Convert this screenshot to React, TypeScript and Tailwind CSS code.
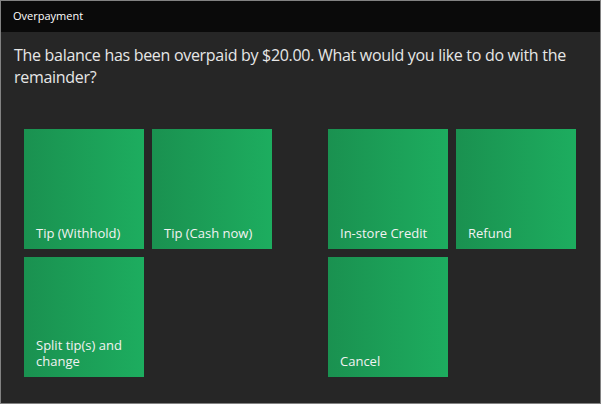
import type { FC } from "react";

interface ITileProps {
  label: string;
}

const Tile: FC<ITileProps> = ({ label }) => (
  <button className="w-[120px] h-[120px] flex items-end px-3 pb-2 text-left text-[13px] leading-[16px] text-[#f2f2f2] bg-gradient-to-r from-[#1a9150] to-[#1dad5f]">
    {label}
  </button>
);

export default function App() {
  return (
    <div
      className="w-[601px] h-[404px] flex flex-col border border-[#828282] bg-[#262626]"
      style={{ fontFamily: '"Open Sans", "Noto Sans", sans-serif' }}
    >
      <div className="h-[31px] shrink-0 flex items-center px-3 bg-[#0a0a0a] text-[11px] text-white">
        Overpayment
      </div>

      <p className="pl-[13px] pr-1 pt-[12px] text-[16px] leading-[22px] text-[#e6e6e6] tracking-[-0.3px]">
        The balance has been overpaid by $20.00. What would you like to do with the remainder?
      </p>

      <div className="flex gap-[56px] pl-[23px] pt-[41px]">
        <div className="grid grid-cols-[120px_120px] gap-2">
          <Tile label="Tip (Withhold)" />
          <Tile label="Tip (Cash now)" />
          <Tile label="Split tip(s) and change" />
        </div>
        <div className="grid grid-cols-[120px_120px] gap-2">
          <Tile label="In-store Credit" />
          <Tile label="Refund" />
          <Tile label="Cancel" />
        </div>
      </div>
    </div>
  );
}
